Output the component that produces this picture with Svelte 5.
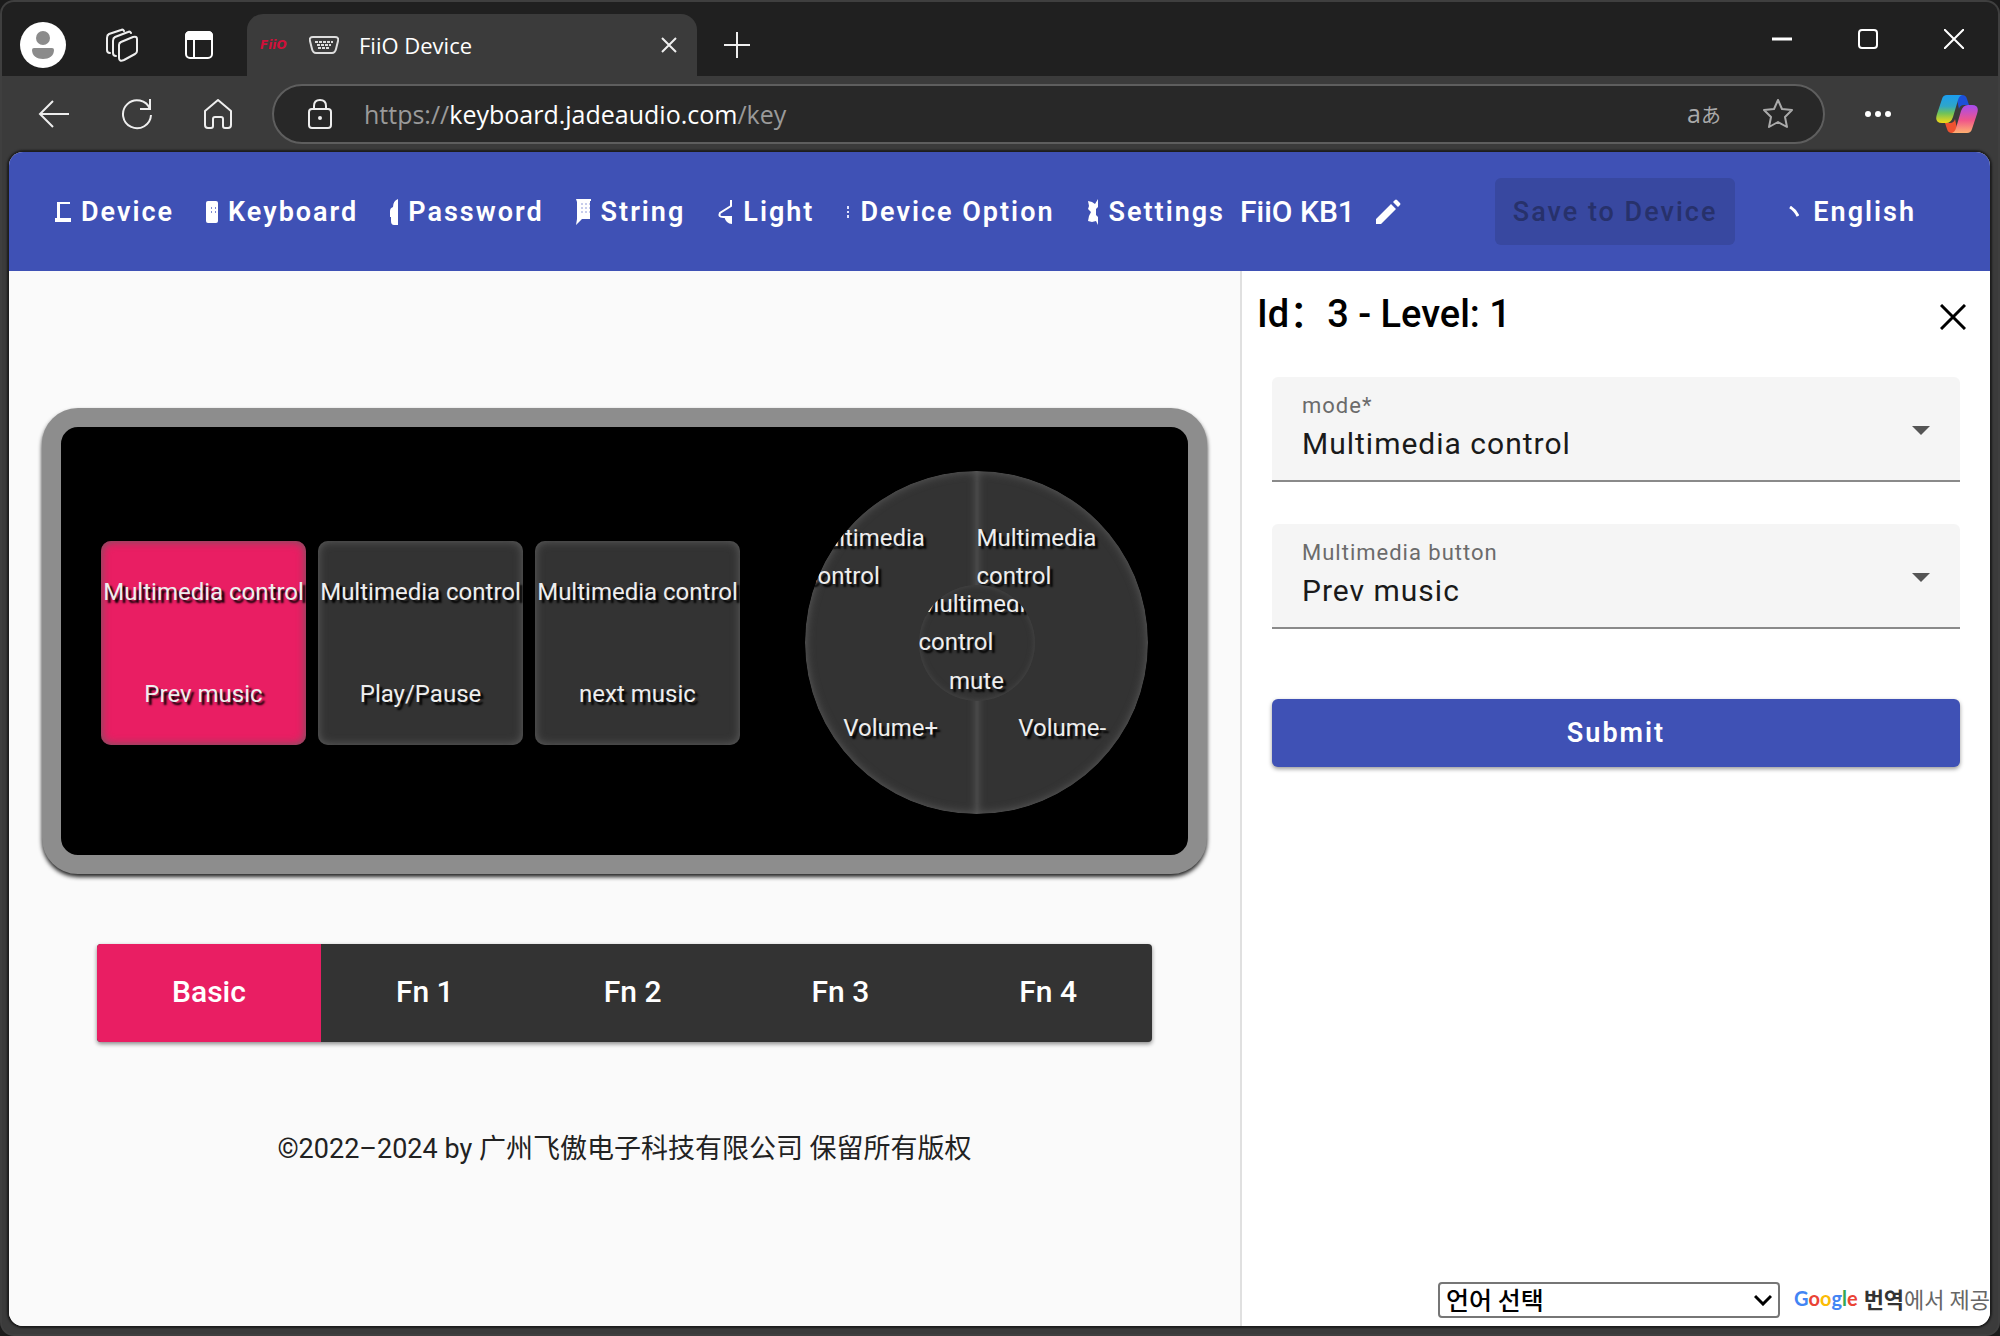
<script lang="ts">
    interface Key {
        id: number;
        mode: string;
        action: string;
    }

    const navItems = [
        { icon: 'device', label: 'Device' },
        { icon: 'keyboard', label: 'Keyboard' },
        { icon: 'password', label: 'Password' },
        { icon: 'string', label: 'String' },
        { icon: 'light', label: 'Light' },
        { icon: 'option', label: 'Device Option' },
        { icon: 'settings', label: 'Settings' },
    ];

    const keys: Key[] = [
        { id: 3, mode: 'Multimedia control', action: 'Prev music' },
        { id: 4, mode: 'Multimedia control', action: 'Play/Pause' },
        { id: 5, mode: 'Multimedia control', action: 'next music' },
    ];

    const knob: Key[] = [
        { id: 0, mode: 'Multimedia control', action: 'Volume+' },
        { id: 1, mode: 'Multimedia control', action: 'Volume-' },
    ];
    const knobCenter: Key = { id: 2, mode: 'Multimedia control', action: 'mute' };

    const levels = ['Basic', 'Fn 1', 'Fn 2', 'Fn 3', 'Fn 4'];
    const modes = ['Multimedia control', 'Keyboard', 'Mouse'];
    const actions = ['Prev music', 'Play/Pause', 'next music', 'Volume+', 'Volume-', 'mute'];

    let selectedKey = $state(3);
    let level = $state(0);
    let mode = $state('Multimedia control');
    let action = $state('Prev music');
</script>

<div class="window">
    <div class="titlebar">
        <div class="tools">
            <button class="plain" aria-label="Profile">
                <svg width="46" height="46" viewBox="0 0 46 46">
                    <circle cx="23" cy="23" r="23" fill="#fff" />
                    <circle cx="23" cy="16" r="7" fill="#8b8b8b" />
                    <path d="M12 28q0-2 2-2h18q2 0 2 2c0 6-5 9-11 9s-11-3-11-9z" fill="#8b8b8b" />
                </svg>
            </button>
            <button class="plain" aria-label="Workspaces">
                <svg width="34" height="34" viewBox="0 0 34 34" fill="none" stroke="#eee" stroke-width="2" stroke-linejoin="round" stroke-linecap="round">
                    <path d="M17 14l12-5q4-1 4 2v12q0 2-2 3l-11 6q-5 2-5-2V17q0-2 2-3z" />
                    <path d="M12 28q-3 0-3-3V13q0-3 2-4l13-5q2-1 3 1M6 25q-3 0-3-3V10q0-3 2-4l12-4q2-1 3 1" />
                </svg>
            </button>
            <button class="plain" aria-label="Tab actions">
                <svg width="28" height="28" viewBox="0 0 28 28" fill="none" stroke="#fff" stroke-width="2">
                    <rect x="1" y="1" width="26" height="26" rx="4" />
                    <path d="M1 8V5q0-4 4-4h18q4 0 4 4v3z" fill="#fff" />
                    <path d="M9 8v19" />
                </svg>
            </button>
        </div>
        <div class="tab">
            <span class="brand">FiiO</span>
            <svg width="30" height="18" viewBox="0 0 30 18" fill="none" stroke="#ddd" stroke-width="2">
                <path d="M4 1h22q4 0 3 4l-2 8q-1 4-4 4H7q-3 0-4-4L1 5q-1-4 3-4z" />
                <path d="M6 6h18M8 9h14M9 12h12" stroke-dasharray="3 1" />
            </svg>
            <span class="tab-title">FiiO Device</span>
            <button class="plain" aria-label="Close tab">
                <svg width="16" height="18" viewBox="0 0 16 18" stroke="#eee" stroke-width="2"><path d="M1 2l14 14M15 2L1 16" /></svg>
            </button>
        </div>
        <button class="plain new-tab" aria-label="New tab">
            <svg width="28" height="28" viewBox="0 0 28 28" stroke="#eee" stroke-width="2"><path d="M1 14h26M14 1v26" /></svg>
        </button>
        <div class="window-controls">
            <button class="plain" aria-label="Minimize">
                <svg width="20" height="20" viewBox="0 0 20 20" stroke="#fff" stroke-width="3"><path d="M0 10h20" /></svg>
            </button>
            <button class="plain" aria-label="Maximize">
                <svg width="20" height="20" viewBox="0 0 20 20" fill="none" stroke="#fff" stroke-width="2"><rect x="1" y="1" width="18" height="18" rx="3" /></svg>
            </button>
            <button class="plain" aria-label="Close">
                <svg width="20" height="20" viewBox="0 0 20 20" stroke="#fff" stroke-width="2"><path d="M0 0l20 20M20 0L0 20" /></svg>
            </button>
        </div>
    </div>

    <div class="toolbar">
        <div class="nav-buttons">
            <button class="plain" aria-label="Back">
                <svg width="32" height="28" viewBox="0 0 32 28" fill="none" stroke="#eee" stroke-width="2"><path d="M31 14H2M15 1L2 14l13 13" /></svg>
            </button>
            <button class="plain" aria-label="Refresh">
                <svg width="32" height="34" viewBox="0 0 32 34" fill="none" stroke="#eee" stroke-width="2"><path d="M29 12A14 14 0 1 0 30 18M29 2v10H19" /></svg>
            </button>
            <button class="plain" aria-label="Home">
                <svg width="28" height="30" viewBox="0 0 28 30" fill="none" stroke="#eee" stroke-width="2" stroke-linejoin="round">
                    <path d="M1 12L14 1l13 11v14q0 3-3 3h-3q-2 0-2-2v-7q0-2-2-2h-6q-2 0-2 2v7q0 2-2 2H4q-3 0-3-3z" />
                </svg>
            </button>
        </div>
        <div class="address">
            <svg width="24" height="30" viewBox="0 0 24 30" fill="none" stroke="#eee" stroke-width="2">
                <rect x="1" y="10" width="22" height="19" rx="3" />
                <path d="M6 10V7q0-6 6-6t6 6v3" />
                <circle cx="12" cy="19" r="2" fill="#eee" stroke="none" />
            </svg>
            <span class="url">https://<b>keyboard.jadeaudio.com</b>/key</span>
            <button class="plain translate" aria-label="Translate">a<small>あ</small></button>
            <button class="plain" aria-label="Add to favorites">
                <svg width="30" height="30" viewBox="0 0 30 30" fill="none" stroke="#aaa" stroke-width="2" stroke-linejoin="round">
                    <path d="M15 1l4 9 10 1-7 7 2 10-9-5-9 5 2-10-7-7 10-1z" />
                </svg>
            </button>
        </div>
        <div class="extras">
            <button class="plain" aria-label="More">
                <svg width="26" height="6" viewBox="0 0 26 6" fill="#fff"><circle cx="3" cy="3" r="3" /><circle cx="13" cy="3" r="3" /><circle cx="23" cy="3" r="3" /></svg>
            </button>
            <button class="plain" aria-label="Copilot">
                <svg width="42" height="40" viewBox="0 0 42 40">
                    <defs>
                        <linearGradient id="cool" x1="0" y1="0" x2="0" y2="1">
                            <stop offset="0" stop-color="#1b9df0" />
                            <stop offset="0.4" stop-color="#2fa6c8" />
                            <stop offset="0.65" stop-color="#6fc25a" />
                            <stop offset="1" stop-color="#f5d914" />
                        </linearGradient>
                        <linearGradient id="warm" x1="0" y1="0" x2="0" y2="1">
                            <stop offset="0" stop-color="#a64bf0" />
                            <stop offset="0.55" stop-color="#f0568a" />
                            <stop offset="1" stop-color="#ffb070" />
                        </linearGradient>
                    </defs>
                    <path d="M20 1h6q4 0 5 4l2 6h-5q-4 0-5 4z" fill="#1c50d8" />
                    <path d="M22 39h-6q-4 0-5-4l-2-6h5q4 0 5-4z" fill="#ee5230" />
                    <path d="M11 1h15q-3 1-4 5l-5 17q-2 6-7 6H6q-8 0-5-9L6 5q1-4 5-4z" fill="url(#cool)" />
                    <path d="M31 39H16q3-1 4-5l5-17q2-6 7-6h4q8 0 5 9l-5 15q-1 4-5 4z" fill="url(#warm)" />
                </svg>
            </button>
        </div>
    </div>

    <div class="page">
        <header>
            <nav>
                {#each navItems as item}
                    <a href="#{item.icon}">
                        {#if item.icon === 'device'}
                            <svg width="16" height="20" viewBox="0 0 16 20" fill="#fff"><path d="M2 0h13v2H5v14h11v4H0v-4h2z" /></svg>
                        {:else if item.icon === 'keyboard'}
                            <svg width="12" height="22" viewBox="0 0 12 22"><rect width="12" height="22" rx="2" fill="#fff" /><path d="M5 6h1v2H5zM9 6h1v2H9zM5 10h1v2H5zM9 10h1v2H9z" fill="#7f8bd0" /></svg>
                        {:else if item.icon === 'password'}
                            <svg width="8" height="26" viewBox="0 0 8 26" fill="#fff"><path d="M8 0v26H4q-3 0-3-4v-4H0v-6q0-3 3-4 0-6 5-8z" /></svg>
                        {:else if item.icon === 'string'}
                            <svg width="15" height="26" viewBox="0 0 15 26"><path d="M0 0h15v2h-1v18H6l-6 6 1-6V3z" fill="#fff" /><path d="M5 5h9M5 9h9M5 13h9" stroke="#8f9ad8" stroke-width="1" stroke-dasharray="2 2" /></svg>
                        {:else if item.icon === 'light'}
                            <svg width="16" height="24" viewBox="0 0 16 24" fill="none" stroke="#fff" stroke-width="2"><path d="M14 0v6L3 13q-2 4 3 4h9" /><path d="M7 16h8v8q-6 0-8-8z" fill="#fff" stroke="none" /></svg>
                        {:else if item.icon === 'option'}
                            <svg width="4" height="12" viewBox="0 0 4 12" fill="#dfe3ff"><path d="M1 0h2v3H1zM1 5h2v2H1zM1 9h2v3H1z" /></svg>
                        {:else}
                            <svg width="12" height="26" viewBox="0 0 12 26" fill="#fff"><path d="M11 0v8l-2 2v6l2 2v8l-2-4-4 1-4-1 1-5 2-4-3-3 1-3-1-5 4 1 3 2z" /></svg>
                        {/if}
                        <span>{item.label}</span>
                    </a>
                {/each}
            </nav>
            <div class="device-name">
                <span>FiiO KB1</span>
                <button class="plain" aria-label="Rename device">
                    <svg width="26" height="26" viewBox="0 0 26 26" fill="#fff"><path d="M1 20L16 5l5 5L6 25H1zM18 3l2-2q1-1 2 0l3 3q1 1 0 2l-2 2z" /></svg>
                </button>
            </div>
            <button class="save" disabled>Save to Device</button>
            <button class="plain language">
                <svg width="10" height="12" viewBox="0 0 10 12" stroke="#fff" stroke-width="3" fill="none"><path d="M1 1q5 3 8 9" /></svg>
                <span>English</span>
            </button>
        </header>

        <main>
            <section class="board">
                <div class="device">
                    <div class="keys">
                        {#each keys as key}
                            <button class="key" class:active={selectedKey === key.id} onclick={() => selectedKey = key.id}>
                                <span>{key.mode}</span>
                                <span>{key.action}</span>
                            </button>
                        {/each}
                    </div>
                    <div class="knob">
                        <div class="ring">
                            {#each knob as key}
                                <button class="half" class:active={selectedKey === key.id} onclick={() => selectedKey = key.id}>
                                    <span>{key.mode}</span>
                                    <span>{key.action}</span>
                                </button>
                            {/each}
                        </div>
                        <button class="center" class:active={selectedKey === knobCenter.id} onclick={() => selectedKey = knobCenter.id}>
                            <span>{knobCenter.mode}</span>
                            <span>{knobCenter.action}</span>
                        </button>
                    </div>
                </div>

                <div class="levels">
                    {#each levels as name, i}
                        <button class:active={level === i} onclick={() => level = i}>{name}</button>
                    {/each}
                </div>

                <footer>©2022–2024 by 广州飞傲电子科技有限公司 保留所有版权</footer>
            </section>

            <aside>
                <div class="panel-header">
                    <h2>Id：{selectedKey} - Level: {level + 1}</h2>
                    <button class="plain" aria-label="Close panel">
                        <svg width="26" height="26" viewBox="0 0 26 26" stroke="#000" stroke-width="3"><path d="M1 1l24 24M25 1L1 25" /></svg>
                    </button>
                </div>

                <form onsubmit={(e) => e.preventDefault()}>
                    <div class="field">
                        <label for="mode">mode*</label>
                        <select id="mode" bind:value={mode}>
                            {#each modes as m}<option>{m}</option>{/each}
                        </select>
                        <svg class="arrow" width="18" height="9" viewBox="0 0 18 9" fill="#555"><path d="M0 0h18L9 9z" /></svg>
                    </div>
                    <div class="field">
                        <label for="action">Multimedia button</label>
                        <select id="action" bind:value={action}>
                            {#each actions as a}<option>{a}</option>{/each}
                        </select>
                        <svg class="arrow" width="18" height="9" viewBox="0 0 18 9" fill="#555"><path d="M0 0h18L9 9z" /></svg>
                    </div>
                    <button class="submit" type="submit">Submit</button>
                </form>

                <div class="translate-bar">
                    <div class="translate-select">
                        <select aria-label="언어 선택"><option>언어 선택</option></select>
                        <svg width="18" height="12" viewBox="0 0 18 12" fill="none" stroke="#000" stroke-width="3"><path d="M1 2l8 8 8-8" /></svg>
                    </div>
                    <a class="google" href="#translate">
                        <span class="logo"><i class="blue">G</i><i class="red">o</i><i class="yellow">o</i><i class="blue">g</i><i class="green">l</i><i class="red">e</i></span>
                        <span><b>번역</b>에서 제공</span>
                    </a>
                </div>
            </aside>
        </main>
    </div>
</div>

<style>
    :global(body) {
        margin: 0;
        background: #1b1b1b;
    }

    .window {
        box-sizing: border-box;
        min-height: 100vh;
        display: flex;
        flex-direction: column;
        border: 2px solid #3f3f3f;
        border-radius: 14px;
        background: #3b3b3b;
        overflow: hidden;
        font-family: Roboto, "Noto Sans CJK SC", sans-serif;
    }

    button,
    select {
        font: inherit;
        cursor: pointer;
    }

    .plain {
        display: flex;
        align-items: center;
        justify-content: center;
        padding: 0;
        border: none;
        background: none;
        color: inherit;
    }

    svg {
        display: block;
        flex: none;
    }

    /* browser chrome */
    .titlebar {
        display: flex;
        align-items: stretch;
        height: 74px;
        background: #202020;
        font-family: "Open Sans", "Noto Sans CJK JP", sans-serif;
    }

    .tools {
        display: flex;
        align-items: center;
        gap: 32px;
        width: 227px;
        padding: 12px 0 0 18px;
    }

    .tools button {
        width: 46px;
    }

    .tab {
        flex: 0 1 450px;
        box-sizing: border-box;
        display: flex;
        align-items: center;
        margin-top: 12px;
        padding: 0 20px 0 13px;
        border-radius: 16px 16px 0 0;
        background: #3b3b3b;
        color: #fff;
        font-size: 22px;
        line-height: 30px;
    }

    .brand {
        width: 49px;
        color: #d0103a;
        font-family: "DejaVu Sans", sans-serif;
        font-size: 12px;
        font-style: italic;
        font-weight: 700;
    }

    .tab-title {
        flex: 1;
        margin-left: 20px;
    }

    .new-tab {
        margin: 12px 0 0 26px;
    }

    .window-controls {
        display: flex;
        align-items: center;
        gap: 66px;
        margin-left: auto;
        padding-right: 34px;
    }

    .toolbar {
        display: flex;
        align-items: center;
        gap: 40px;
        height: 76px;
        padding: 0 20px 0 36px;
        font-family: "Open Sans", "Noto Sans CJK JP", sans-serif;
    }

    .nav-buttons {
        display: flex;
        align-items: center;
        gap: 51px;
    }

    .extras {
        display: flex;
        align-items: center;
        gap: 45px;
    }

    .address {
        flex: 1;
        display: flex;
        align-items: center;
        height: 56px;
        padding: 0 30px 0 34px;
        border: 2px solid #5e5e5e;
        border-radius: 30px;
        background: #282828;
        color: #9a9a9a;
        font-size: 25px;
    }

    .url {
        flex: 1;
        margin-left: 32px;
        white-space: nowrap;
    }

    .url b {
        color: #fff;
        font-weight: 400;
    }

    .translate {
        align-items: baseline;
        margin-right: 42px;
        color: #aaa;
        line-height: 32px;
    }

    .translate small {
        font-size: 20px;
    }

    /* page */
    .page {
        flex: 1;
        display: flex;
        flex-direction: column;
        margin: 0 8px 8px 7px;
        border-radius: 14px;
        background: #fff;
        overflow: hidden;
        box-shadow: 0 0 2px 2px #1c1c1c;
    }

    header {
        box-sizing: border-box;
        display: flex;
        align-items: center;
        height: 119px;
        padding: 0 74px 0 46px;
        background: #3f51b5;
        color: #fff;
        font-size: 27px;
        font-weight: 600;
        line-height: 30px;
        letter-spacing: 2px;
        white-space: nowrap;
    }

    nav {
        display: flex;
        gap: 32px;
    }

    nav a {
        display: flex;
        align-items: center;
        gap: 10px;
        color: inherit;
        text-decoration: none;
    }

    .device-name {
        display: flex;
        align-items: center;
        gap: 20px;
        margin-left: 15px;
        font-size: 30px;
        font-weight: 500;
        letter-spacing: normal;
    }

    .save {
        height: 67px;
        margin-left: auto;
        padding: 0 18px;
        border: none;
        border-radius: 6px;
        background: #3848a0;
        color: #27316b;
        font-weight: 500;
        letter-spacing: 2px;
        cursor: default;
    }

    .language {
        gap: 14px;
        margin-left: 54px;
        letter-spacing: 2px;
    }

    main {
        flex: 1;
        display: grid;
        grid-template-columns: minmax(0, 1fr) 750px;
    }

    .board {
        padding: 137px 33px 0;
        background: #fafafa;
    }

    .device {
        display: flex;
        align-items: center;
        justify-content: space-between;
        padding: 44px 40px 41px;
        border: 19px solid #8d8d8d;
        border-radius: 36px;
        background: #000;
        box-shadow: 0 3px 4px #222;
        color: #eee;
        font-size: 24px;
        line-height: 38px;
        text-shadow: 3px 3px 2px #000;
    }

    .keys {
        display: flex;
        gap: 12px;
    }

    .key,
    .half,
    .center {
        display: grid;
        grid-template-rows: 1fr 1fr;
        place-items: center;
        padding: 0;
        border: none;
        background: #333;
        box-shadow: inset 0 0 10px #606060;
        color: inherit;
        text-align: left;
        text-shadow: inherit;
    }

    .key {
        width: 205px;
        height: 204px;
        border-radius: 10px;
        white-space: nowrap;
    }

    .active {
        background: #e91e63;
    }

    .knob {
        display: grid;
        place-items: center;
    }

    .ring,
    .center {
        grid-area: 1 / 1;
        border-radius: 50%;
        overflow: hidden;
    }

    .ring {
        display: grid;
        grid-template-columns: 1fr 1fr;
        width: 343px;
        height: 343px;
    }

    .half:first-child {
        border-radius: 171px 0 0 171px;
    }

    .half:last-child {
        border-radius: 0 171px 171px 0;
    }

    .center {
        z-index: 1;
        grid-template-rows: auto auto;
        grid-template-columns: minmax(0, 1fr);
        width: 116px;
        height: 116px;
        box-shadow: inset 0 0 6px #4a4a4a;
    }

    .center span {
        max-width: 100%;
    }

    .levels {
        display: flex;
        margin: 70px 55px 0;
        border-radius: 4px;
        background: #333;
        box-shadow: 0 2px 4px #888;
        overflow: hidden;
    }

    .levels button {
        flex: 1 1 auto;
        height: 98px;
        padding: 0 70px 4px;
        border: none;
        background: none;
        color: #fff;
        font-size: 30px;
        font-weight: 500;
        white-space: nowrap;
    }

    .levels button.active {
        background: #e91e63;
    }

    footer {
        margin-top: 87px;
        color: #222;
        font-size: 27px;
        line-height: 40px;
        text-align: center;
    }

    aside {
        display: flex;
        flex-direction: column;
        border-left: 2px solid #e0e0e0;
        background: #fff;
        overflow: hidden;
    }

    .panel-header {
        display: flex;
        align-items: center;
        justify-content: space-between;
        height: 92px;
        padding: 0 24px 0 15px;
    }

    h2 {
        margin: 0;
        padding-bottom: 6px;
        font-size: 38px;
        font-weight: 500;
        line-height: 44px;
    }

    form {
        display: flex;
        flex-direction: column;
        padding: 14px 30px 0;
    }

    .field {
        position: relative;
        display: flex;
        flex-direction: column;
        margin-bottom: 42px;
        padding-top: 17px;
        border-bottom: 2px solid #8a8a8a;
        border-radius: 6px 6px 0 0;
        background: #f5f5f5;
        letter-spacing: 1px;
    }

    .field label {
        padding: 0 30px;
        color: #6b6b6b;
        font-size: 22px;
        line-height: 24px;
    }

    .field select {
        height: 62px;
        padding: 0 30px 12px;
        border: none;
        background: none;
        color: #1a1a1a;
        font-size: 30px;
        letter-spacing: 1px;
        appearance: none;
    }

    .arrow {
        position: absolute;
        top: 49px;
        right: 30px;
        pointer-events: none;
    }

    .submit {
        height: 68px;
        margin-top: 28px;
        border: none;
        border-radius: 6px;
        background: #3f51b5;
        box-shadow: 0 2px 4px #999;
        color: #fff;
        font-size: 27px;
        font-weight: 600;
        letter-spacing: 2px;
    }

    .translate-bar {
        display: flex;
        align-items: center;
        justify-content: flex-end;
        gap: 14px;
        margin-top: auto;
        padding-bottom: 8px;
        font-family: "Noto Sans CJK KR", sans-serif;
        white-space: nowrap;
    }

    .translate-select {
        display: grid;
        align-items: center;
        width: 342px;
    }

    .translate-select select {
        grid-area: 1 / 1;
        height: 36px;
        padding: 0 6px 4px;
        border: 2px solid #767676;
        border-radius: 4px;
        background: #fff;
        color: #000;
        font-size: 25px;
        font-weight: 500;
        line-height: 30px;
        appearance: none;
    }

    .translate-select svg {
        grid-area: 1 / 1;
        justify-self: end;
        margin-right: 8px;
        pointer-events: none;
    }

    .google {
        display: flex;
        align-items: center;
        gap: 6px;
        padding-bottom: 4px;
        color: #666;
        font-size: 22px;
        line-height: 32px;
        text-decoration: none;
    }

    .google b {
        color: #333;
    }

    .logo {
        font-family: Lato, sans-serif;
        font-size: 20px;
        font-weight: 700;
    }

    .logo i {
        font-style: normal;
    }

    .blue {
        color: #4285f4;
    }

    .red {
        color: #ea4335;
    }

    .yellow {
        color: #fbbc05;
    }

    .green {
        color: #34a853;
    }
</style>
